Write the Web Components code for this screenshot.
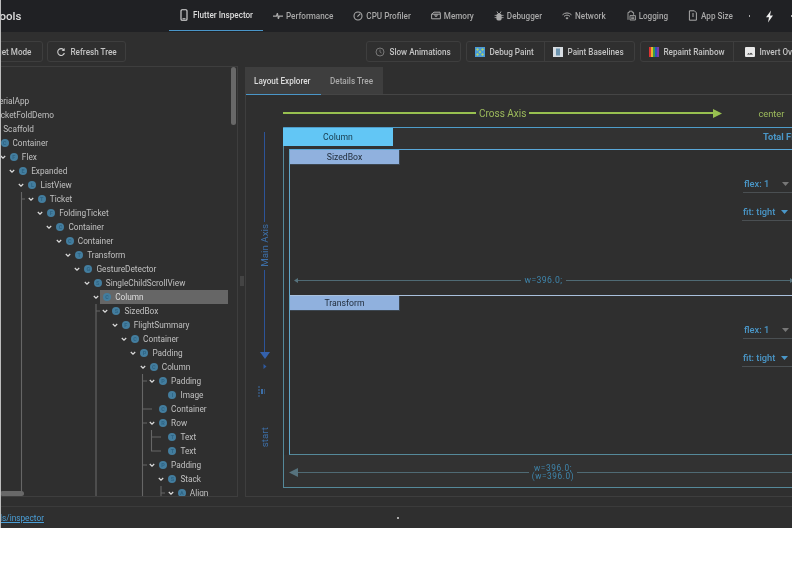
<!DOCTYPE html>
<html>
<head>
<meta charset="utf-8">
<title>Flutter Inspector</title>
<style>
  html, body { margin: 0; background: #fff; font-family: Roboto, "Liberation Sans", sans-serif; }
</style>
</head>
<body>
<dt-app>
  <dt-topbar>
    <dt-nav-tab active><svg slot="icon" width="10" height="12" viewBox="0 0 10 12"><rect x="2" y=".8" width="6" height="10.4" rx="1" fill="none" stroke="#ddd" stroke-width="1.1"/><rect x="3.5" y="9.3" width="3" height="1" fill="#ddd"/></svg>Flutter Inspector</dt-nav-tab>
    <dt-nav-tab><svg slot="icon" width="10" height="10" viewBox="0 0 10 10"><path d="M0 5.2h3.4l1-3 1 5.6.8-2.6H10" fill="none" stroke="#aaa" stroke-width="1.2"/></svg>Performance</dt-nav-tab>
    <dt-nav-tab><svg slot="icon" width="10" height="10" viewBox="0 0 10 10"><circle cx="5" cy="5" r="4" fill="none" stroke="#aaa" stroke-width="1.1"/><path d="M4.4 5.6 7.4 2.6" stroke="#aaa" stroke-width="1.2"/></svg>CPU Profiler</dt-nav-tab>
    <dt-nav-tab><svg slot="icon" width="10" height="10" viewBox="0 0 10 10"><path d="M.6 3.2 3 1.2h6l.4 2v4.6H.6zM.6 3.2h8.8M4 3.2v2h2v-2" fill="none" stroke="#aaa" stroke-width="1"/></svg>Memory</dt-nav-tab>
    <dt-nav-tab><svg slot="icon" width="10" height="10" viewBox="0 0 10 10"><path d="M3 .5l1 2h2l1-2" fill="none" stroke="#aaa" stroke-width=".9"/><rect x="2.4" y="2.8" width="5.2" height="6.6" rx="1.6" fill="#aaa"/><path d="M.6 4.4h9M.6 6.6h9" stroke="#aaa" stroke-width=".8"/></svg>Debugger</dt-nav-tab>
    <dt-nav-tab><svg slot="icon" width="10" height="10" viewBox="0 0 10 10"><path d="M.5 3.8a6.4 6.4 0 0 1 9 0M2 5.4a4.2 4.2 0 0 1 6 0" fill="none" stroke="#aaa" stroke-width="1"/><path d="M3.5 6.9a2.1 2.1 0 0 1 3 0L5 8.4z" fill="#aaa"/></svg>Network</dt-nav-tab>
    <dt-nav-tab><svg slot="icon" width="10" height="11" viewBox="0 0 10 11"><path d="M2 9.8V2.4h1.4V1.2h2.8v1.2h1.4v2.4M4 5.6h5.4v4.4H4zM5.2 7.2h3M5.2 8.6h3" fill="none" stroke="#aaa" stroke-width=".9"/></svg>Logging</dt-nav-tab>
    <dt-nav-tab><svg slot="icon" width="10" height="11" viewBox="0 0 10 11"><path d="M1.4.8h5l2 2v7.4h-7zM5 3v4" fill="none" stroke="#aaa" stroke-width="1"/></svg>App Size</dt-nav-tab>
  </dt-topbar>

  <dt-toolbar>
    <dt-button-group style="margin-left:-42px"><dt-button style="width:83px;padding-left:12px">Target Mode</dt-button></dt-button-group>
    <dt-button-group style="margin-left:4px"><dt-button style="width:77px"><svg slot="icon" width="10" height="10" viewBox="0 0 10 10"><path d="M8 3.2A3.4 3.4 0 1 0 8.4 6" fill="none" stroke="#ccc" stroke-width="1.1"/><path d="M8.6.9v3H5.6z" fill="#ccc"/></svg>Refresh Tree</dt-button></dt-button-group>
    <dt-button-group style="margin-left:240px"><dt-button style="width:93px"><svg slot="icon" width="10" height="10" viewBox="0 0 10 10"><circle cx="5" cy="5" r="4" fill="none" stroke="#777" stroke-width="1"/><path d="M5 2.6V5l1.6 1" fill="none" stroke="#777" stroke-width=".9"/></svg>Slow Animations</dt-button></dt-button-group>
    <dt-button-group style="margin-left:5px">
      <dt-button style="width:78px"><svg slot="icon" width="10" height="10" viewBox="0 0 10 10"><rect width="10" height="10" fill="#4a9ad8"/><path d="M2.5 1 4 2.5 2.5 4 1 2.5zM7.5 1 9 2.5 7.5 4 6 2.5zM2.5 6 4 7.5 2.5 9 1 7.5zM7.5 6 9 7.5 7.5 9 6 7.5zM5 3.5 6.5 5 5 6.5 3.5 5z" fill="#a8d070"/></svg>Debug Paint</dt-button>
      <dt-button style="width:89px"><svg slot="icon" width="10" height="10" viewBox="0 0 10 10"><rect width="10" height="10" fill="#d8dde2"/><rect x="3" y="1.5" width="4" height="7" fill="#6d95b0"/></svg>Paint Baselines</dt-button>
    </dt-button-group>
    <dt-button-group style="margin-left:5px">
      <dt-button style="width:93px"><svg slot="icon" width="10" height="10" viewBox="0 0 10 10"><rect width="2" height="10" fill="#d33"/><rect x="2" width="2" height="10" fill="#e9b52c"/><rect x="4" width="2" height="10" fill="#3a9a46"/><rect x="6" width="2" height="10" fill="#2c4fc0"/><rect x="8" width="2" height="10" fill="#7a3aa8"/></svg>Repaint Rainbow</dt-button>
      <dt-button style="width:100px;padding-left:11px"><svg slot="icon" width="10" height="10" viewBox="0 0 10 10"><rect width="10" height="10" rx="1" fill="#e8e8e8"/><path d="M2 7.6 3.6 6l1 1 1.4-1.2 2 1.8z" fill="#333"/></svg>Invert Oversized Images</dt-button>
    </dt-button-group>
  </dt-toolbar>

  <dt-main>
    <dt-tree>
      <dt-tree-row d="-3" letter="M">MaterialApp</dt-tree-row>
      <dt-tree-row d="-2" letter="T">TicketFoldDemo</dt-tree-row>
      <dt-tree-row d="-1" letter="S">Scaffold</dt-tree-row>
      <dt-tree-row d="0" letter="C">Container</dt-tree-row>
      <dt-tree-row d="1" letter="F">Flex</dt-tree-row>
      <dt-tree-row d="2" letter="E">Expanded</dt-tree-row>
      <dt-tree-row d="3" letter="L">ListView</dt-tree-row>
      <dt-tree-row d="4" letter="T">Ticket</dt-tree-row>
      <dt-tree-row d="5" letter="F">FoldingTicket</dt-tree-row>
      <dt-tree-row d="6" letter="C">Container</dt-tree-row>
      <dt-tree-row d="7" letter="C">Container</dt-tree-row>
      <dt-tree-row d="8" letter="T">Transform</dt-tree-row>
      <dt-tree-row d="9" letter="G">GestureDetector</dt-tree-row>
      <dt-tree-row d="10" letter="S">SingleChildScrollView</dt-tree-row>
      <dt-tree-row d="11" letter="C" selected>Column</dt-tree-row>
      <dt-tree-row d="12" letter="S">SizedBox</dt-tree-row>
      <dt-tree-row d="13" letter="F">FlightSummary</dt-tree-row>
      <dt-tree-row d="14" letter="C">Container</dt-tree-row>
      <dt-tree-row d="15" letter="P">Padding</dt-tree-row>
      <dt-tree-row d="16" letter="C">Column</dt-tree-row>
      <dt-tree-row d="17" letter="P">Padding</dt-tree-row>
      <dt-tree-row d="18" letter="I" leaf>Image</dt-tree-row>
      <dt-tree-row d="17" letter="C" leaf>Container</dt-tree-row>
      <dt-tree-row d="17" letter="R">Row</dt-tree-row>
      <dt-tree-row d="18" letter="T" leaf>Text</dt-tree-row>
      <dt-tree-row d="18" letter="T" leaf>Text</dt-tree-row>
      <dt-tree-row d="17" letter="P">Padding</dt-tree-row>
      <dt-tree-row d="18" letter="S">Stack</dt-tree-row>
      <dt-tree-row d="19" letter="A">Align</dt-tree-row>
    </dt-tree>
    <dt-splitter></dt-splitter>
    <dt-details>
      <dt-layout-explorer>
        <dt-flex-child label="SizedBox" dim="w=396.0;" style="height:146px"></dt-flex-child>
        <dt-flex-child label="Transform" style="height:158.5px;--top:#a9c0dc"></dt-flex-child>
      </dt-layout-explorer>
    </dt-details>
  </dt-main>

  <dt-statusbar><a>devtools/inspector</a></dt-statusbar>
</dt-app>

<script>
function shadow(el, html) {
    el.attachShadow({mode: 'open'}).innerHTML = html;
}

class DtApp extends HTMLElement {
    constructor() {
        super();
        shadow(this, `<style>
            :host { display: flex; flex-direction: column; position: relative; width: 792px; height: 528px; overflow: hidden;
                background: #2f2f2f; color: #bbb; font: 8.25px Roboto, "Liberation Sans", sans-serif; filter: blur(.4px); }
            :host::after { content: ""; position: absolute; left: 0; top: 0; bottom: 0; width: 1px; background: #bdbdbd; }
        </style><slot></slot>`);
    }
}

class DtTopbar extends HTMLElement {
    constructor() {
        super();
        shadow(this, `<style>
            :host { display: flex; flex: none; height: 32px; background: #202124; }
            .title { flex: none; width: 195px; margin-left: -26px; line-height: 32px; font-size: 11.5px; font-weight: 500; color: #ddd; }
            .extra { display: flex; align-items: center; flex: none; }
            .dot { width: 1.5px; height: 1.5px; background: #aaa; margin-left: 6px; }
        </style>
        <div class="title">DevTools</div>
        <slot></slot>
        <div class="extra">
            <span class="dot"></span>
            <svg style="margin-left:15px" width="9" height="13" viewBox="0 0 9 13"><path d="M6 .5 1 7.2h3L3 12.5 8 5.6H5z" fill="#eee"/></svg>
            <span class="dot" style="margin-left:17px"></span>
        </div>`);
    }
}

class DtNavTab extends HTMLElement {
    constructor() {
        super();
        shadow(this, `<style>
            :host { display: flex; flex: none; align-items: center; box-sizing: border-box; height: 31px; padding: 0 10px; color: #a8a8a8; font-size: 8.15px; font-weight: 500; white-space: nowrap; }
            :host([active]) { color: #ddd; border-bottom: 1.5px solid #4a96c8; }
            :host([active]) .i { margin-right: 4px; }
            .i { display: flex; justify-content: center; width: 10px; margin-right: 3px; }
        </style><span class="i"><slot name="icon"></slot></span><slot></slot>`);
    }
}

class DtToolbar extends HTMLElement {
    constructor() {
        super();
        shadow(this, `<style>
            :host { display: flex; flex: none; box-sizing: border-box; height: 34px; padding-top: 9px; }
        </style><slot></slot>`);
    }
}

class DtButtonGroup extends HTMLElement {
    constructor() {
        super();
        shadow(this, `<style>
            :host { display: flex; flex: none; height: 21px; box-sizing: border-box; border: 1px solid #3e3e3e; border-radius: 3px; }
        </style><slot></slot>`);
    }
}

class DtButton extends HTMLElement {
    constructor() {
        super();
        shadow(this, `<style>
            :host { display: flex; flex: none; align-items: center; box-sizing: border-box; padding-left: 8px; color: #c4c4c4; font-size: 8.15px; font-weight: 500; white-space: nowrap; overflow: hidden; }
            :host(:not(:last-child)) { border-right: 1px solid #3e3e3e; }
            .i { display: flex; width: 10px; margin-right: 4.5px; flex: none; }
        </style><span class="i"><slot name="icon"></slot></span><slot></slot>`);
    }
}

class DtMain extends HTMLElement {
    constructor() {
        super();
        shadow(this, `<style>
            :host { display: flex; flex: none; height: 431px; margin-bottom: 9px; }
        </style><slot></slot>`);
    }
}

class DtTree extends HTMLElement {
    constructor() {
        super();
        // connector lines and scrollbars sit over the rows, coordinates are the tree's own
        shadow(this, `<style>
            :host { display: block; position: relative; flex: none; box-sizing: border-box; width: 238px; padding-top: 27px; overflow: hidden;
                border: 1px solid #3e3e3e; border-left: none; }
            svg { position: absolute; left: 0; top: -1px; }
            .v { position: absolute; left: 231px; top: 0; width: 5px; height: 58px; border-radius: 3px; background: #686868; }
            .h { position: absolute; left: 0; top: 424px; width: 24px; height: 5px; border-radius: 3px; background: #686868; }
        </style>
        <slot></slot>
        <svg width="238" height="431" fill="none" stroke="#666" stroke-width="1.1">
            <path d="M21.5 126V431M21.5 133H25"/>
            <path d="M96 238V431M96 245H100"/>
            <path d="M142.5 308V431M142.5 315H147M142.5 343H152M142.5 357H147M142.5 399H147"/>
            <path d="M151.5 364V385H161M151.5 371H161"/>
            <path d="M161 420V431M161 427H165"/>
        </svg>
        <div class="v"></div><div class="h"></div>`);
    }
}

class DtTreeRow extends HTMLElement {
    constructor() {
        super();
        shadow(this, `<style>
            :host { display: flex; align-items: center; height: 14px; color: #c0c0c0; white-space: nowrap; margin-left: calc(var(--d) * 9.33px - 10.5px); width: calc(238.5px - var(--d) * 9.33px); }
            .c { flex: none; width: 8px; height: 8px; }
            :host([leaf]) .c { visibility: hidden; }
            .n { flex: 1; display: flex; align-items: center; height: 14px; padding-left: 3px; }
            :host([selected]) .n { background: #666; color: #ddd; }
            .b { flex: none; width: 8px; height: 8px; margin-right: 4px; border-radius: 50%; background: #437d9e; color: #2e6484; font-size: 5.5px; font-weight: 700; line-height: 8px; text-align: center; }
        </style>
        <svg class="c" viewBox="0 0 8 8"><path d="M1.8 3 4 5.2 6.2 3" fill="none" stroke="#ddd" stroke-width="1.2"/></svg>
        <div class="n"><span class="b"></span><slot></slot></div>`);
    }
    connectedCallback() {
        this.style.setProperty('--d', this.getAttribute('d'));
        this.shadowRoot.querySelector('.b').textContent = this.getAttribute('letter');
    }
}

class DtSplitter extends HTMLElement {
    constructor() {
        super();
        shadow(this, `<style>
            :host { display: flex; flex: none; width: 7px; align-items: center; justify-content: center; }
            i { display: block; width: 4px; height: 10px; margin-bottom: 1px; background: #444; }
        </style><i></i>`);
    }
}

class DtDetails extends HTMLElement {
    constructor() {
        super();
        shadow(this, `<style>
            :host { display: flex; flex-direction: column; flex: none; width: 560px; box-sizing: border-box; margin-top: 1px; border-left: 1px solid #3e3e3e; border-bottom: 1px solid #3e3e3e; }
            .tabs { display: flex; flex: none; height: 28px; box-sizing: border-box; border-bottom: 1px solid #454545; }
            .tab { box-sizing: border-box; height: 28px; padding-top: 9px; background: #3e3e3e; color: #aaa; font-size: 8.15px; font-weight: 500; white-space: nowrap; }
            .on { width: 75px; padding-left: 8px; color: #ddd; border-bottom: 1.5px solid #4a96c8; }
            .off { width: 62px; padding-left: 9px; height: 27px; }
        </style>
        <div class="tabs"><div class="tab on">Layout Explorer</div><div class="tab off">Details Tree</div></div>
        <slot></slot>`);
    }
}

class DtLayoutExplorer extends HTMLElement {
    constructor() {
        super();
        shadow(this, `<style>
            :host { display: grid; grid-template-columns: 37px 1fr; grid-template-rows: 32px 360.5px; flex: none; }
            .cross { grid-column: 2; display: flex; align-items: center; padding-top: 4px; box-sizing: border-box; color: #9dbb5c; white-space: nowrap; }
            .cross i { display: block; height: 1.2px; background: #98c050; flex: none; }
            .cross b { font-weight: 400; font-size: 10px; margin: 0 3px; }
            .cross svg { flex: none; margin-left: -1.5px; }
            .center { margin-left: 36.5px; font-size: 9.3px; }
            .main { display: flex; flex-direction: column; align-items: center; padding: 5px 0 0 0; color: #3d6fa8; font-size: 9.8px; }
            .main i { display: block; width: 1.4px; background: #2d5498; flex: none; }
            .vt { writing-mode: vertical-rl; transform: rotate(180deg); white-space: nowrap; flex: none; }
            .box { box-sizing: border-box; width: 540px; height: 360.5px; display: flex; flex-direction: column; border: 1px solid #55899a; border-top-color: #4e9cc9; }
            .head { display: flex; flex: none; height: 21px; background: #323232; }
            .name { flex: none; box-sizing: border-box; width: 110px; height: 18px; margin: -.5px 0 0 -1px; background: #62c6f5; color: #173a4c; font-size: 8.67px; text-align: center; line-height: 18px; }
            .total { margin-left: 370px; color: #4a97c8; font-weight: 700; font-size: 9.3px; line-height: 17px; white-space: nowrap; }
            .inner { display: flex; flex-direction: column; flex: none; margin-left: 5px; border-left: 1px solid #5fa6c8; border-bottom: 1px solid #55899a; }
            .foot { flex: 1; display: flex; align-items: center; box-sizing: content-box; width: 520px; padding: 3px 0 0 4.5px; background: #323232; color: #3f86ad; }
            .foot svg { flex: none; }
            .foot i { flex: 1; display: block; height: 1px; background: #4f6a74; }
            .foot span { text-align: center; line-height: 8.5px; padding: 0 3px; letter-spacing: .6px; white-space: nowrap; }
        </style>
        <div class="cross">
            <i style="width:193px"></i><b>Cross Axis</b><i style="width:185px"></i>
            <svg width="9" height="9" viewBox="0 0 9 9"><path d="M0 0 9 4.5 0 9z" fill="#98c050"/></svg>
            <span class="center">center</span>
        </div>
        <div class="main">
            <i style="height:90px"></i>
            <span class="vt" style="margin:2px 0 3px">Main Axis</span>
            <i style="height:82px"></i>
            <svg width="10" height="7" viewBox="0 0 10 7" style="flex:none"><path d="M0 0H10L5 7z" fill="#3461ac"/></svg>
            <svg width="4" height="5" viewBox="0 0 4 5" style="flex:none;margin-top:5px"><path d="M.5 0 3.5 2.5 .5 5z" fill="#2f5aa0"/></svg>
            <svg width="8" height="11" viewBox="0 0 8 11" style="flex:none;margin-top:17px;margin-left:-5px"><path d="M1 0V11" stroke="#3d6fa8" stroke-dasharray="2 1"/><path d="M3 3h2v5H3z" fill="#3d6fa8"/><path d="M6 3h1v5H6z" fill="#3d6fa8" opacity=".6"/></svg>
            <span class="vt" style="margin-top:30px">start</span>
        </div>
        <div class="box">
            <div class="head"><div class="name">Column</div><div class="total">Total Flex Factor</div></div>
            <div class="inner"><slot></slot></div>
            <div class="foot">
                <svg width="9" height="9" viewBox="0 0 9 9"><path d="M9 0 0 4.5 9 9z" fill="#56727d"/></svg>
                <i></i><span>w=396.0;<br>(w=396.0)</span><i></i>
            </div>
        </div>`);
    }
}

class DtFlexChild extends HTMLElement {
    constructor() {
        super();
        shadow(this, `<style>
            :host { display: flex; flex-direction: column; flex: none; box-sizing: border-box; border-top: 1px solid var(--top, #5aa8d8); }
            .name { flex: none; box-sizing: border-box; width: 110px; height: 15px; background: #90b1de; color: #1e2a38; font-size: 8.67px; text-align: center; line-height: 14px; border-right: 1px solid #3c4650; border-bottom: 1px solid #3c4650; }
            .ctl { display: flex; flex-direction: column; gap: 10px; flex: none; margin: 10px 0 0 453px; width: 60px; color: #4a97c8; font-weight: 500; font-size: 9.3px; }
            .sel { display: flex; align-items: center; box-sizing: border-box; height: 18px; padding-left: 1px; border-bottom: 1px solid #4a4f52; white-space: nowrap; }
            .sel + .sel { margin-left: -1px; }
            .sel svg { flex: none; }
            .dim { display: none; align-items: center; flex: none; margin: auto 0 10px 3.5px; width: 500px; color: #3f86ad; font-size: 8.67px; }
            :host([dim]) .dim { display: flex; }
            .dim i { flex: 1; display: block; height: 1px; background: #4f6a74; }
            .dim span { padding: 0 3px; letter-spacing: .4px; white-space: nowrap; }
        </style>
        <div class="name"></div>
        <div class="ctl">
            <div class="sel">flex: 1<svg style="margin-left:13px" width="7" height="4" viewBox="0 0 7 4"><path d="M0 0H7L3.5 4z" fill="#777"/></svg></div>
            <div class="sel">fit: tight<svg style="margin-left:6px" width="7" height="4" viewBox="0 0 7 4"><path d="M0 0H7L3.5 4z" fill="#4a97c8"/></svg></div>
        </div>
        <div class="dim">
            <svg width="4" height="5" viewBox="0 0 4 5"><path d="M4 0 0 2.5 4 5z" fill="#56727d"/></svg>
            <i></i><span class="w"></span><i></i>
            <svg width="4" height="5" viewBox="0 0 4 5"><path d="M0 0 4 2.5 0 5z" fill="#56727d"/></svg>
        </div>`);
    }
    connectedCallback() {
        this.shadowRoot.querySelector('.name').textContent = this.getAttribute('label');
        this.shadowRoot.querySelector('.w').textContent = this.getAttribute('dim') || '';
    }
}

class DtStatusbar extends HTMLElement {
    constructor() {
        super();
        shadow(this, `<style>
            :host { display: flex; flex: 1; align-items: center; border-top: 1px solid #3b3b3b; white-space: nowrap; }
            ::slotted(a) { margin-left: -25px; color: #4a9fd8; text-decoration: underline; flex: none; width: 422px; }
            i { display: block; width: 2px; height: 2px; background: #aaa; }
        </style><slot></slot><i></i>`);
    }
}

customElements.define('dt-app', DtApp);
customElements.define('dt-topbar', DtTopbar);
customElements.define('dt-nav-tab', DtNavTab);
customElements.define('dt-toolbar', DtToolbar);
customElements.define('dt-button-group', DtButtonGroup);
customElements.define('dt-button', DtButton);
customElements.define('dt-main', DtMain);
customElements.define('dt-tree', DtTree);
customElements.define('dt-tree-row', DtTreeRow);
customElements.define('dt-splitter', DtSplitter);
customElements.define('dt-details', DtDetails);
customElements.define('dt-layout-explorer', DtLayoutExplorer);
customElements.define('dt-flex-child', DtFlexChild);
customElements.define('dt-statusbar', DtStatusbar);
</script>
</body>
</html>
